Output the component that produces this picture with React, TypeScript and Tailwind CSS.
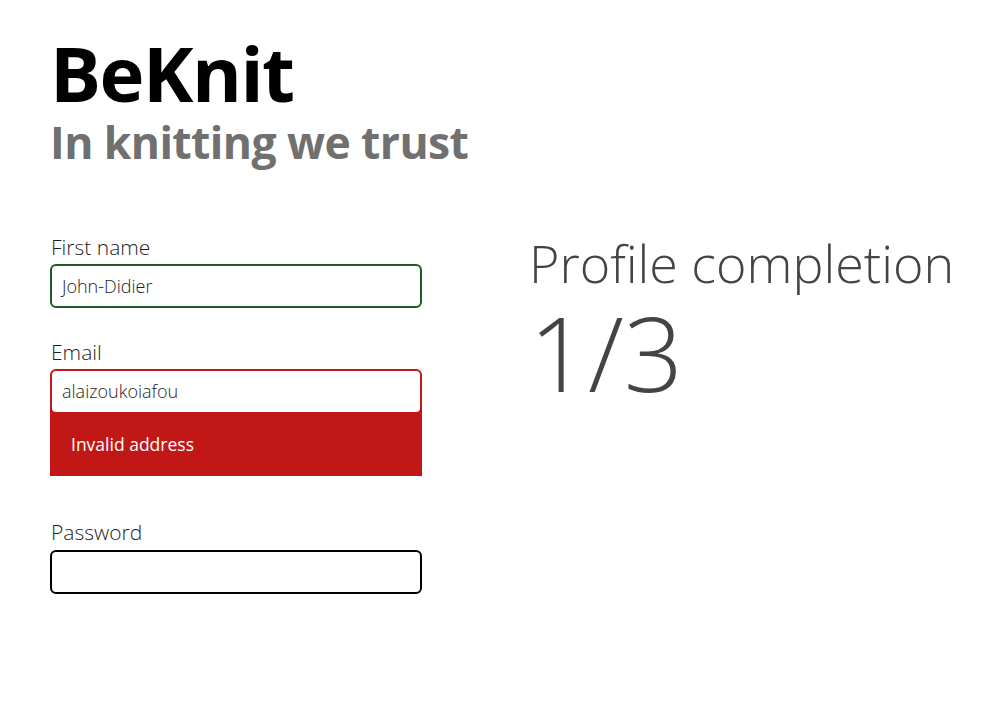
import React from "react";

export default function App() {
  const font = { fontFamily: '"Open Sans", "Noto Sans", sans-serif' };
  return (
    <div className="w-[1000px] h-[728px] bg-white text-black" style={font}>
      <div className="pl-[50px] pt-[33px]">
        <h1 className="text-[76px] leading-[80px] font-bold tracking-[-1.5px]">BeKnit</h1>
        <h2 className="text-[44.5px] leading-[48px] font-bold text-[#707070] mt-[5px] tracking-[-0.6px]">In knitting we trust</h2>
      </div>
      <div className="flex pl-[50px] mt-[69px]">
        <div className="w-[372px] flex flex-col">
          <label className="text-[21px] leading-[24px] font-light text-[#1e1e1e] pl-[1px]">First name</label>
          <div className="mt-[5px] h-[44px] border-2 border-[#1f5a1f] rounded-[6px] flex items-center px-[10px] text-[18px] font-light text-[#1e1e1e]">
            John-Didier
          </div>
          <label className="mt-[32px] text-[21px] leading-[24px] font-light text-[#1e1e1e] pl-[1px]">Email</label>
          <div className="mt-[5px] bg-[#c21717] rounded-t-[6px] pt-[2px] px-[2px]">
            <div className="h-[41px] bg-white rounded-[4px] flex items-center px-[10px] text-[18px] font-light text-[#1e1e1e]">
              alaizoukoiafou
            </div>
            <div className="h-[64px] flex items-center pl-[19px] text-[17.5px] text-white">Invalid address</div>
          </div>
          <label className="mt-[44px] text-[21px] leading-[24px] font-light text-[#1e1e1e] pl-[1px]">Password</label>
          <div className="mt-[6px] h-[44px] border-2 border-black rounded-[6px]"></div>
        </div>
        <div className="ml-[107px] text-[#444]">
          <div className="text-[52px] leading-[60px] font-light mt-[-2px]">Profile completion</div>
          <div className="text-[104px] leading-[110px] font-light mt-[4px]">1/3</div>
        </div>
      </div>
    </div>
  );
}
